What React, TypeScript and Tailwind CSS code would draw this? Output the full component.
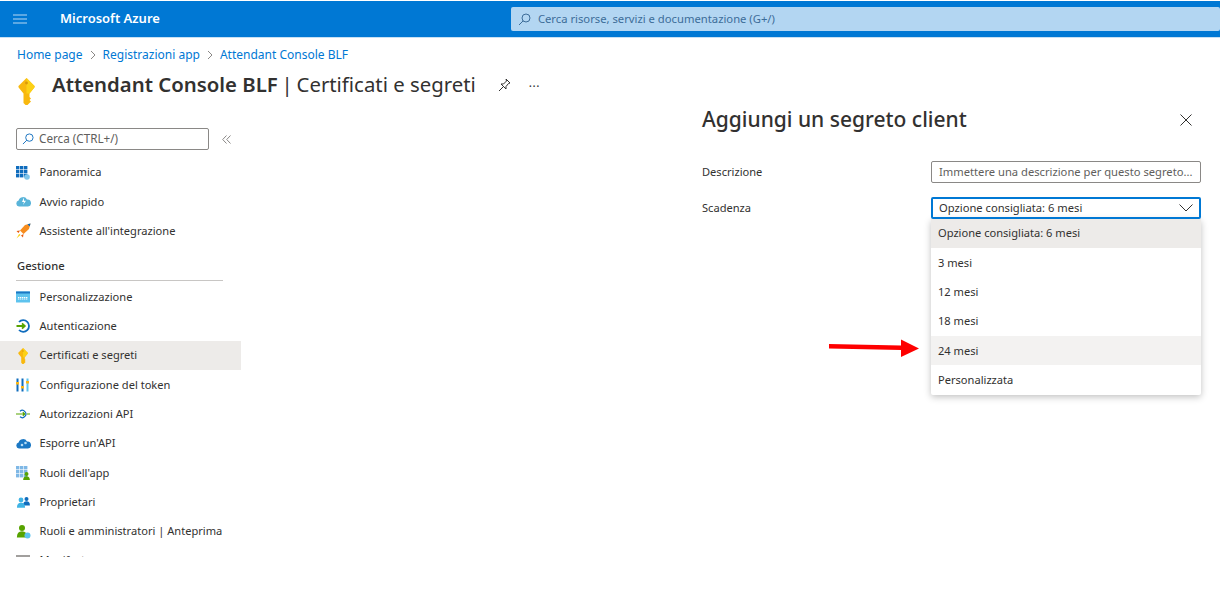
import React from "react";

const Key = ({ w = 17, h = 27 }: { w?: number; h?: number }) => (
  <svg width={w} height={h} viewBox="0 0 17 27">
    <path d="M8.5 0 L16.5 8 Q17 9 16 10 L11.5 15.5 V19 L13 20.5 L11.5 22 L13 23.5 L9.5 27 H7.5 L5.5 25 V15.5 L1 10 Q0 9 0.5 8 Z" fill="#f8b80e" />
    <path d="M8.5 0 L16.5 8 Q17 9 16 10 L11.5 15.5 H8.5 Z" fill="#fcd116" />
    <circle cx="8.5" cy="5" r="1.4" fill="#d9980a" />
  </svg>
);

const Grid = () => (
  <svg width="14" height="14" viewBox="0 0 14 14">
    {[0, 4, 8].flatMap((x) => [0, 4, 8].map((y) => <rect key={`${x}-${y}`} x={x} y={y} width="3.4" height="3.4" fill="#0f6cbd" />))}
    <circle cx="11" cy="11" r="2.8" fill="#7fc4ea" />
  </svg>
);
const Cloud = () => (
  <svg width="15" height="11" viewBox="0 0 15 11">
    <path d="M3 10.5 A3 3 0 0 1 2.6 4.6 A4.5 4.5 0 0 1 11 3.6 A3.4 3.4 0 0 1 12 10.5 Z" fill="#59b4d9" />
    <path d="M8 1.5 L6 6 H8 L7 9 L10 4.8 H8 Z" fill="#fff" />
  </svg>
);
const Rocket = () => (
  <svg width="15" height="16" viewBox="0 0 15 16">
    <path d="M14.5 0.5 L9 2 L4 7.5 L7.5 11 L13 6 Z" fill="#f78d1e" />
    <path d="M14.5 0.5 L11.5 1.3 L13.8 3.5 Z" fill="#0f6cbd" />
    <path d="M4 7.5 L0.5 8 L2.5 10 Z M7.5 11 L7 14.5 L5 12.5 Z" fill="#e8590c" />
    <path d="M3.2 10.8 L4.5 12 L0.5 15.5 Z" fill="#fcd116" />
  </svg>
);
const Www = () => (
  <svg width="14" height="12" viewBox="0 0 14 12">
    <rect width="14" height="11" y="0.5" rx="0.6" fill="#5ec3ee" />
    <rect width="14" height="2" y="0.5" fill="#1b78c4" />
    <path d="M2 6.5 H12 M2 8 H12" stroke="#fff" strokeWidth="1" strokeDasharray="1.4 .6" />
  </svg>
);
const Auth = () => (
  <svg width="14" height="14" viewBox="0 0 14 14" fill="none">
    <path d="M3 3 A5.8 5.8 0 1 1 3 11" stroke="#0f6cbd" strokeWidth="1.8" />
    <path d="M0.5 7 H8.5 M6 4.4 L8.8 7 L6 9.6" stroke="#57a300" strokeWidth="1.8" />
  </svg>
);
const Token = () => (
  <svg width="13" height="14" viewBox="0 0 13 14">
    <rect x="0.5" y="0.5" width="2" height="13" fill="#0f6cbd" />
    <rect x="5.5" y="0.5" width="2" height="13" fill="#0f6cbd" />
    <rect x="10.5" y="0.5" width="2" height="13" fill="#5ec3ee" />
    <rect x="0" y="4" width="3" height="2.5" fill="#fcb714" />
    <rect x="5" y="8" width="3" height="2.5" fill="#fcb714" />
    <rect x="10" y="3" width="3" height="2.5" fill="#fcb714" />
  </svg>
);
const Api = () => (
  <svg width="14" height="10" viewBox="0 0 14 10" fill="none">
    <path d="M0 5 H3 M11 5 H14" stroke="#57a300" strokeWidth="1.2" />
    <path d="M4 2.2 A3.6 3.6 0 1 1 4 7.8" stroke="#0f6cbd" strokeWidth="1.2" />
    <path d="M3 5 H8.5 M6.8 3.2 L8.7 5 L6.8 6.8" stroke="#57a300" strokeWidth="1.2" />
  </svg>
);
const CloudApi = () => (
  <svg width="15" height="11" viewBox="0 0 15 11">
    <path d="M3 10.5 A3 3 0 0 1 2.6 4.6 A4.5 4.5 0 0 1 11 3.6 A3.4 3.4 0 0 1 12 10.5 Z" fill="#1b78c4" />
    <circle cx="6" cy="7" r="1.3" fill="#b5dcf5" />
    <circle cx="9.5" cy="5" r="1.3" fill="#b5dcf5" />
  </svg>
);
const Person = ({ c, cx, cy, r }: { c: string; cx: number; cy: number; r: number }) => (
  <g fill={c}>
    <circle cx={cx} cy={cy} r={r} />
    <path d={`M${cx - r * 1.7} ${cy + r * 3.2} Q${cx - r * 1.7} ${cy + r * 1.1} ${cx} ${cy + r * 1.1} Q${cx + r * 1.7} ${cy + r * 1.1} ${cx + r * 1.7} ${cy + r * 3.2} Z`} />
  </g>
);
const AppRoles = () => (
  <svg width="15" height="14" viewBox="0 0 15 14">
    {[0, 4, 8].flatMap((x) => [0, 4, 8].map((y) => <rect key={`${x}-${y}`} x={x} y={y} width="3.4" height="3.4" fill="#7fb8e6" />))}
    <Person c="#57a300" cx={10.5} cy={8} r={2} />
  </svg>
);
const Owners = () => (
  <svg width="15" height="12" viewBox="0 0 15 12">
    <Person c="#0f6cbd" cx={10.5} cy={3} r={2} />
    <Person c="#40b4e5" cx={5} cy={4} r={2.4} />
  </svg>
);
const Admins = () => (
  <svg width="15" height="15" viewBox="0 0 15 15">
    <Person c="#57a300" cx={6} cy={4} r={3} />
    <circle cx="11.5" cy="11.5" r="3" fill="#5ec3ee" />
  </svg>
);
const Manifest = () => (
  <svg width="14" height="12" viewBox="0 0 14 12">
    <rect width="14" height="12" fill="#a19f9d" />
  </svg>
);

const Search = ({ c, s = 13 }: { c: string; s?: number }) => (
  <svg width={s} height={s} viewBox="0 0 13 13" fill="none" stroke={c} strokeWidth="1">
    <circle cx="8" cy="5" r="4" />
    <path d="M5.2 7.8 L1 12" />
  </svg>
);

const Row = ({ icon, label, active }: { icon: React.ReactNode; label: string; active?: boolean }) => (
  <div className={`flex h-[29.3px] shrink-0 items-center pl-[16px] text-[11.1px] text-[#323130] ${active ? "bg-[#edebe9]" : ""}`}>
    <span className="flex w-[23.5px] shrink-0 items-center justify-start">{icon}</span>
    <span className="whitespace-nowrap">{label}</span>
  </div>
);

const Opt = ({ label, bg }: { label: string; bg?: string }) => (
  <div className={`flex h-[29.3px] items-center pl-[7px] text-[11.1px] text-[#323130] ${bg ?? ""}`}>{label}</div>
);

export default function App() {
  return (
    <div className="relative flex h-[592px] w-[1220px] flex-col overflow-hidden bg-white pt-px font-['Noto_Sans',sans-serif]">
      <header className="flex h-[36px] shrink-0 items-center bg-[#0078d4]">
        <svg className="ml-[13px]" width="14" height="12" viewBox="0 0 14 12" stroke="#b7d8f2" strokeWidth="1.2">
          <path d="M0 2 H14 M0 6 H14 M0 10 H14" />
        </svg>
        <span className="ml-[33px] text-[13px] font-semibold text-white">Microsoft Azure</span>
        <div className="ml-[351px] flex h-[24px] flex-1 items-center rounded-[2px] bg-[#b3d6f2] pl-[7px] text-[11.25px] text-[#3d6d99]">
          <Search c="#3d6d99" />
          <span className="ml-[7px]">Cerca risorse, servizi e documentazione (G+/)</span>
        </div>
      </header>
      <div className="h-px shrink-0 bg-[#c7e0f4]" />

      <div className="flex h-[519px] shrink-0 overflow-hidden">
        <div className="flex w-[702px] shrink-0 flex-col">
          <nav className="mt-[9px] flex h-[16px] shrink-0 items-center pl-[17px] text-[12px] text-[#0078d4]">
            <span>Home page</span>
            <svg className="mx-[7px]" width="6" height="10" viewBox="0 0 6 10" fill="none" stroke="#8a8886"><path d="M1 1 L5 5 L1 9" /></svg>
            <span>Registrazioni app</span>
            <svg className="mx-[7px]" width="6" height="10" viewBox="0 0 6 10" fill="none" stroke="#8a8886"><path d="M1 1 L5 5 L1 9" /></svg>
            <span>Attendant Console BLF</span>
          </nav>
          <div className="mt-[9px] flex h-[34px] shrink-0 items-start">
            <span className="ml-[18px] mt-[6px] w-[34px] shrink-0"><Key /></span>
            <h1 className="mt-[-1px] whitespace-nowrap text-[20.35px] leading-[26px] text-[#323130]">
              <span className="font-semibold">Attendant Console BLF</span>
              <span className="mx-[-1.5px]"> | </span>
              <span>Certificati e segreti</span>
            </h1>
            <svg className="ml-[22px] mt-[6px]" width="13" height="14" viewBox="0 0 13 14" fill="none" stroke="#323130">
              <path d="M8 1 L12 5 L10.5 5.5 L8 8.5 L8 11 L3 6 L5.5 6 L8.5 3 Z M5 9 L1 13" />
            </svg>
            <span className="ml-[18px] mt-[7px] text-[12px] leading-[16px] tracking-[0.5px] text-[#323130]">···</span>
          </div>
          <div className="mt-[22px] flex w-[241px] shrink-0 items-center pl-[16px]">
            <div className="flex h-[22px] w-[193px] items-center rounded-[2px] border border-[#8a8886] pl-[5px] text-[11.7px] text-[#605e5c]">
              <Search c="#0f6cbd" s={12} />
              <span className="ml-[5px]">Cerca (CTRL+/)</span>
            </div>
            <svg className="ml-[13px]" width="9" height="9" viewBox="0 0 9 9" fill="none" stroke="#8a8886"><path d="M4.5 0.5 L0.7 4.5 L4.5 8.5 M8.5 0.5 L4.7 4.5 L8.5 8.5" /></svg>
          </div>
          <div className="mt-[8px] flex w-[241px] shrink-0 flex-col">
            <Row icon={<Grid />} label="Panoramica" />
            <Row icon={<Cloud />} label="Avvio rapido" />
            <Row icon={<Rocket />} label="Assistente all'integrazione" />
            <div className="mt-[8px] flex h-[26px] shrink-0 items-center pl-[17px] text-[11.2px] font-medium text-[#323130]">Gestione</div>
            <div className="ml-[16px] h-px w-[207px] shrink-0 bg-[#c8c6c4]" />
            <div className="h-[1.5px] shrink-0" />
            <Row icon={<Www />} label="Personalizzazione" />
            <Row icon={<Auth />} label="Autenticazione" />
            <Row icon={<span className="ml-[2px] flex"><Key w={10} h={16} /></span>} label="Certificati e segreti" active />
            <Row icon={<Token />} label="Configurazione del token" />
            <Row icon={<Api />} label="Autorizzazioni API" />
            <Row icon={<CloudApi />} label="Esporre un'API" />
            <Row icon={<AppRoles />} label="Ruoli dell'app" />
            <Row icon={<Owners />} label="Proprietari" />
            <Row icon={<Admins />} label="Ruoli e amministratori | Anteprima" />
            <Row icon={<Manifest />} label="Manifesto" />
          </div>
        </div>

        <section className="flex-1 pr-[19px]">
          <div className="mt-[67px] flex h-[30px] items-center justify-between">
            <h2 className="text-[21px] font-medium text-[#323130]">Aggiungi un segreto client</h2>
            <svg className="mr-[9px]" width="12" height="12" viewBox="0 0 12 12" stroke="#323130"><path d="M0.5 0.5 L11.5 11.5 M11.5 0.5 L0.5 11.5" /></svg>
          </div>
          <div className="mt-[26px] flex h-[22px] items-center">
            <span className="w-[229px] text-[11.1px] text-[#323130]">Descrizione</span>
            <div className="flex h-[22px] flex-1 items-center whitespace-nowrap rounded-[2px] border border-[#8a8886] pl-[7px] text-[11.2px] text-[#605e5c]">Immettere una descrizione per questo segreto...</div>
          </div>
          <div className="mt-[14px] flex h-[22px] items-center">
            <span className="w-[229px] text-[11.1px] text-[#323130]">Scadenza</span>
            <div className="flex h-[22px] flex-1 items-center justify-between rounded-[2px] border-2 border-[#0078d4] pl-[6px] pr-[6px] text-[11.2px] text-[#323130]">
              <span>Opzione consigliata: 6 mesi</span>
              <svg width="14" height="8" viewBox="0 0 14 8" fill="none" stroke="#323130"><path d="M0.5 0.5 L7 7 L13.5 0.5" /></svg>
            </div>
          </div>
          <div className="ml-[229px] mt-0 w-[270px] rounded-[2px] bg-white shadow-[0_2px_7px_rgba(0,0,0,0.25)]">
            <Opt label="Opzione consigliata: 6 mesi" bg="bg-[#edebe9]" />
            <Opt label="3 mesi" />
            <Opt label="12 mesi" />
            <Opt label="18 mesi" />
            <Opt label="24 mesi" bg="bg-[#f3f2f1]" />
            <Opt label="Personalizzata" />
          </div>
        </section>
      </div>

      <svg className="absolute left-[829px] top-[339px]" width="91" height="19" viewBox="0 0 91 19">
        <path d="M0 5 L72 6.5 L72 0.5 L90 9.5 L72 18 L72 11 L0 9.5 Z" fill="#fe0000" />
      </svg>
    </div>
  );
}
